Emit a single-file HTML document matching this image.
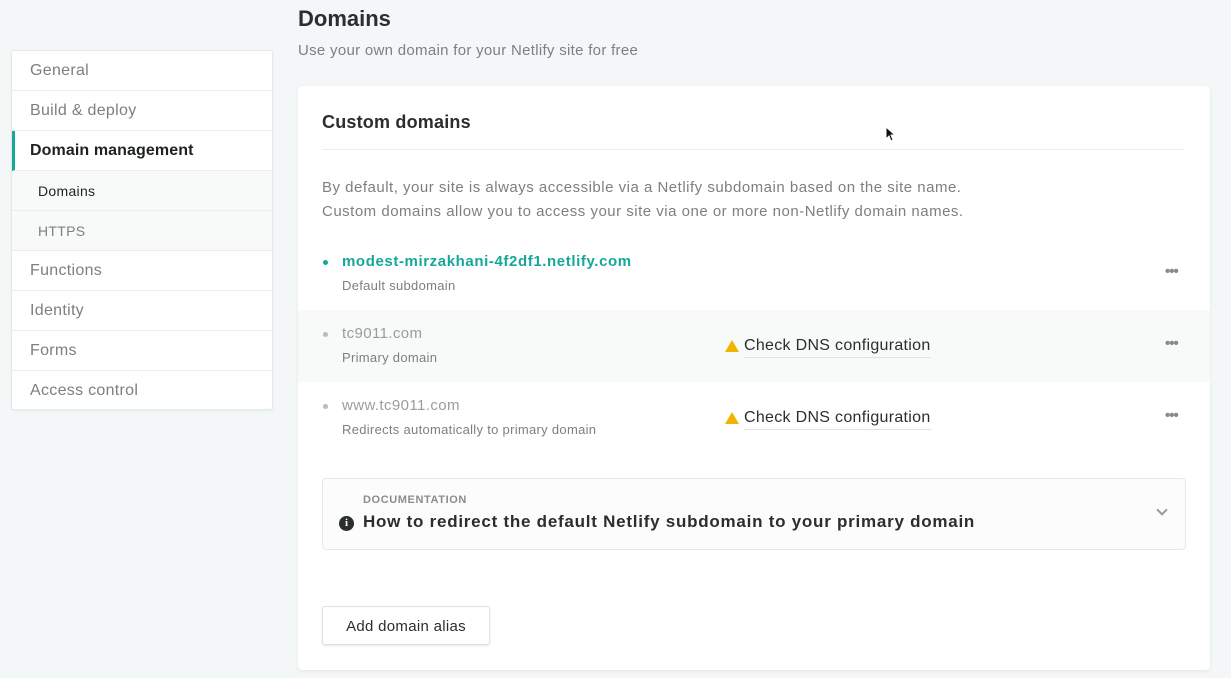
<!DOCTYPE html>
<html><head><style>
*{box-sizing:border-box;margin:0;padding:0}
body{width:1231px;height:678px;overflow:hidden;background:#f4f7f7;font-family:"Liberation Sans",sans-serif;position:relative;color:#333}
.abs{position:absolute;white-space:nowrap}
.side{position:absolute;left:11px;top:50px;width:262px;height:360px;background:#fff;border:1px solid #e6e9e9;border-radius:3px;overflow:hidden;box-shadow:0 1px 2px rgba(0,0,0,.05)}
.side div{height:40px;border-bottom:1px solid #ebeded;padding-left:18px;line-height:40px;font-size:16px;color:#7d8080;letter-spacing:.3px}
.side div.act{color:#1e2222;font-weight:bold;border-left:3px solid #14a89a;padding-left:15px;letter-spacing:.1px}
.side div.sub{background:#f8f9f9;padding-left:26px;font-size:14px;color:#7d8080}
.side div.sub.on{color:#1e2222}
.card{position:absolute;left:298px;top:86px;width:912px;height:584px;background:#fff;border-radius:4px;box-shadow:0 1px 3px rgba(0,0,0,.08)}
.dots{position:absolute;left:1165px;font-size:15px;color:#888;letter-spacing:-1px;font-weight:bold}
.dot{position:absolute;left:323px;width:5px;height:5px;border-radius:50%}
.warn{position:absolute;left:725px;width:0;height:0;border-left:7px solid transparent;border-right:7px solid transparent;border-bottom:12px solid #f0b400}
.dns{position:absolute;left:744px;font-size:16px;color:#2b2e2e;border-bottom:1px solid #dfe2e2;padding-bottom:2px;letter-spacing:.3px}
</style></head><body>
<div class="abs" style="left:298px;top:6px;font-size:22px;font-weight:bold;color:#2b2e2e">Domains</div>
<div class="abs" style="left:298px;top:42px;font-size:15px;color:#7d8080;letter-spacing:.3px">Use your own domain for your Netlify site for free</div>
<div class="side">
<div>General</div><div>Build &amp; deploy</div><div class="act">Domain management</div>
<div class="sub on">Domains</div><div class="sub">HTTPS</div>
<div>Functions</div><div>Identity</div><div>Forms</div><div style="border-bottom:none">Access control</div>
</div>
<div class="card">
<div class="abs" style="left:24px;top:26px;font-size:18px;font-weight:bold;color:#2b2e2e;letter-spacing:.2px">Custom domains</div>
<div style="position:absolute;left:24px;right:26px;top:63px;border-top:1px solid #eceeee"></div>
<div class="abs" style="left:24px;top:90px;font-size:15px;line-height:24px;color:#7d8080;letter-spacing:.5px">By default, your site is always accessible via a Netlify subdomain based on the site name.<br>Custom domains allow you to access your site via one or more non-Netlify domain names.</div>
<div style="position:absolute;left:0;right:0;top:224px;height:72px;background:#f8f9f9"></div>
<div style="position:absolute;left:24px;right:24px;top:392px;height:72px;border:1px solid #e6e9e9;border-radius:4px;background:#fcfcfc"></div>
<div class="abs" style="left:65px;top:408px;font-size:11px;font-weight:bold;color:#8a8d8d;letter-spacing:.6px">DOCUMENTATION</div>
<div class="abs" style="left:41px;top:430px;width:15px;height:15px;border-radius:50%;background:#2b2e2e;color:#fff;font-size:11px;font-weight:bold;text-align:center;line-height:15px;font-family:'Liberation Serif',serif">i</div>
<div class="abs" style="left:65px;top:426px;font-size:17px;font-weight:bold;color:#2b2e2e;letter-spacing:.75px">How to redirect the default Netlify subdomain to your primary domain</div>
<div class="abs" style="left:860px;top:420px;width:8px;height:8px;border-right:2px solid #999;border-bottom:2px solid #999;transform:rotate(45deg)"></div>
<div class="abs" style="left:24px;top:520px;width:168px;height:39px;border:1px solid #dfe2e2;border-radius:3px;box-shadow:0 1px 2px rgba(0,0,0,.1);font-size:15px;color:#2b2e2e;line-height:39px;text-align:center;letter-spacing:.3px">Add domain alias</div>
</div>
<svg class="abs" style="left:885px;top:126px" width="10" height="16" viewBox="0 0 10 16"><path d="M1 1 L1 13 L4 10 L6 15 L8 14 L6 9 L10 9 Z" fill="#111" stroke="#fff" stroke-width="1"/></svg>
<div class="dot" style="top:260px;background:#14a89a"></div>
<div class="abs" style="left:342px;top:253px;font-size:15px;font-weight:bold;color:#14a89a;letter-spacing:.6px">modest-mirzakhani-4f2df1.netlify.com</div>
<div class="abs" style="left:342px;top:278px;font-size:13px;color:#7d8080;letter-spacing:.3px">Default subdomain</div>
<div class="dots" style="top:263px">•••</div>
<div class="dot" style="top:332px;background:#bbb"></div>
<div class="abs" style="left:342px;top:325px;font-size:15px;color:#9a9d9d;letter-spacing:.4px">tc9011.com</div>
<div class="abs" style="left:342px;top:350px;font-size:13px;color:#7d8080;letter-spacing:.3px">Primary domain</div>
<div class="warn" style="top:340px"></div>
<div class="dns" style="top:337px">Check DNS configuration</div>
<div class="dots" style="top:335px">•••</div>
<div class="dot" style="top:404px;background:#bbb"></div>
<div class="abs" style="left:342px;top:397px;font-size:15px;color:#9a9d9d;letter-spacing:.4px">www.tc9011.com</div>
<div class="abs" style="left:342px;top:422px;font-size:13px;color:#7d8080;letter-spacing:.3px">Redirects automatically to primary domain</div>
<div class="warn" style="top:412px"></div>
<div class="dns" style="top:409px">Check DNS configuration</div>
<div class="dots" style="top:407px">•••</div>
</body></html>
